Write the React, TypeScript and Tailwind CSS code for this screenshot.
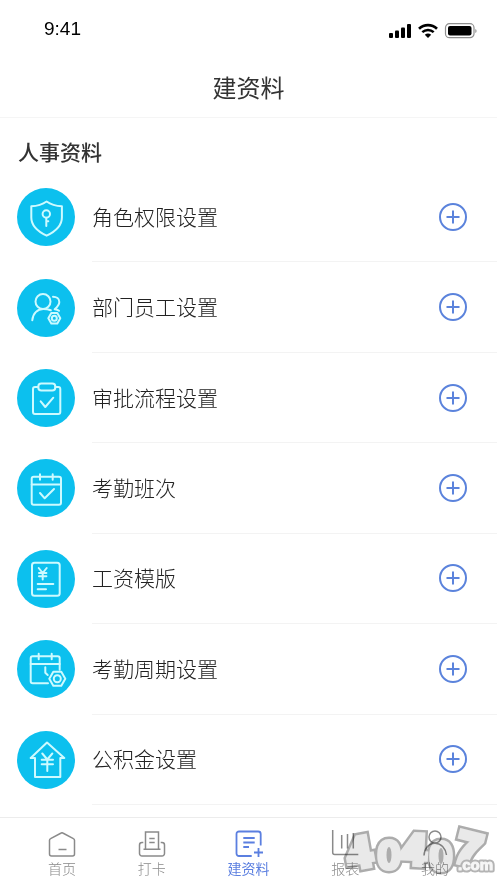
import type { ReactNode } from "react";
import clsx from "clsx";

type Item = {
  label: string;
  icon: ReactNode;
};

type Tab = {
  label: string;
  icon: ReactNode;
  active?: boolean;
};

const ITEMS: Item[] = [
  {
    label: "角色权限设置",
    icon: (
      <>
        <path d="M29.6 13.5c-4.5 3.2-9.5 4.5-15.3 4.800v11.200c0 8.500 6.500 14 15.300 18.200 8.800-4.200 15.300-9.700 15.300-18.200V18.300c-5.800-.3-10.800-1.600-15.300-4.800z" />
        <circle cx="29.300" cy="26" r="3.700" />
        <path d="M29.300 29.700V38M29.300 33.300h2" />
      </>
    ),
  },
  {
    label: "部门员工设置",
    icon: (
      <>
        <circle cx="26" cy="22.500" r="7.500" />
        <path d="M15.300 41.300c.5-6.800 5-11.300 11-11.300 3 0 5 .3 7.500 1.300" />
        <path d="M36 17.800c3.500 0 6.300 1.800 6.300 5.200 0 3-2 5-4.600 7.300M37.700 30.300c1.800.2 3.200.7 4.300 1.500" />
        <path d="M34.300 34h6l3 5.300-3 5.300h-6l-3-5.300z" />
        <circle cx="37.300" cy="39.300" r="2.500" />
      </>
    ),
  },
  {
    label: "审批流程设置",
    icon: (
      <>
        <path d="M21.300 18H18a2 2 0 0 0-2 2v23a2 2 0 0 0 2 2h23.300a2 2 0 0 0 2-2V20a2 2 0 0 0-2-2h-3" />
        <rect x="21.300" y="14.500" width="17" height="7" rx="3" />
        <path d="m23.700 32.300 4.600 5.700 8-9.300" />
      </>
    ),
  },
  {
    label: "考勤班次",
    icon: (
      <>
        <rect x="14.700" y="17.700" width="29.300" height="28" rx="2" />
        <path d="M14.700 25.500H44M23 15.300v5.400M35.700 15.300v5.400" />
        <path d="m23 34 4.700 5.300 9.300-9.300" />
      </>
    ),
  },
  {
    label: "工资模版",
    icon: (
      <>
        <rect x="15" y="12.700" width="27.700" height="33" rx="2.500" />
        <path d="m21.700 18 4 5 4-5M25.700 23v6.500M22 23h7.400M22 26.300h7.400" />
        <path d="M20.700 34h15.600M20.700 39.300H29" />
      </>
    ),
  },
  {
    label: "考勤周期设置",
    icon: (
      <>
        <path d="M31 43.300H15.700a2 2 0 0 1-2-2v-23a2 2 0 0 1 2-2h25a2 2 0 0 1 2 2v11.500" />
        <path d="M13.700 24h29M21.700 13.700v5.600M34.700 13.700v5.600M28.300 27.300v5.500l2.400 2.200" />
        <path d="M36.300 31.700h8l4 7-4 7h-8l-4-7z" />
        <circle cx="40.300" cy="38.700" r="3.500" />
      </>
    ),
  },
  {
    label: "公积金设置",
    icon: (
      <>
        <path d="M18 27v19h25.300V27h4L30 11.500 13.700 27z" />
        <path d="m25.300 22.500 5 6 5-6M30.300 28.500V40M24.700 28.700H36M24.700 33.200H36" />
      </>
    ),
  },
];

const TABS: Tab[] = [
  {
    label: "首页",
    icon: (
      <>
        <path d="M1.500 10.300c0-.8.400-1.400 1.100-1.700L13.200 3c.5-.3 1.100-.3 1.600 0l10.600 5.600c.7.300 1.100.9 1.100 1.700V24a2 2 0 0 1-2 2h-21a2 2 0 0 1-2-2z" />
        <path d="M10.500 19.500h8" />
      </>
    ),
  },
  {
    label: "打卡",
    icon: (
      <>
        <path d="M7.500 19V2h13v17M5.500 19.300h17M11.300 8.500h5.400M11.300 12.500h5.400" />
        <path d="M5.300 12.500H4a2.500 2.500 0 0 0-2.500 2.500v8.500A2.500 2.500 0 0 0 4 26h20a2.500 2.500 0 0 0 2.500-2.500V15a2.500 2.500 0 0 0-2.500-2.500h-1.300" />
      </>
    ),
  },
  {
    label: "建资料",
    active: true,
    icon: (
      <>
        <path d="M16.700 26H4a2.500 2.500 0 0 1-2.500-2.500V4A2.500 2.500 0 0 1 4 1.500h19.200A2.500 2.500 0 0 1 25.700 4v11.500" />
        <path d="M8.300 8h11.400M8.300 12.500h11.400M8.300 17H14M23.500 18v9M19 22.500h9" />
      </>
    ),
  },
  {
    label: "报表",
    icon: <path d="M1.700 0v22.500a2 2 0 0 0 2 2h23.600M10.700 5v13.500M16.500 4v14.500M22.300 3v15.500" />,
  },
  {
    label: "我的",
    icon: (
      <>
        <circle cx="14" cy="7" r="6" />
        <path d="M3 25.500C3.500 18 8 13.200 14 13.200S24.500 18 25.500 25" />
      </>
    ),
  },
];

// one letter of the logo: x, baseline, size, tilt
const LOGO_LETTERS: [string, number, number, number, number][] = [
  ["4", 22, 41, 42, -10],
  ["0", 52, 42, 37, 0],
  ["4", 77, 38, 42, 3],
  ["0", 104, 43, 37, 0],
  ["7", 132, 38, 44, 14],
];

function StatusBar() {
  return (
    <div className="flex h-[58px] items-center justify-between pr-5 pl-11 text-black">
      <span className="font-['Liberation_Sans',sans-serif] text-[19px] leading-6">9:41</span>
      <svg viewBox="0 0 90 18" className="mt-1 h-[18px] w-[90px]" aria-hidden="true">
        <rect x="2" y="11" width="4" height="5" rx="1" />
        <rect x="8" y="8.500" width="4" height="7.500" rx="1" />
        <rect x="14" y="5.500" width="4" height="10.500" rx="1" />
        <rect x="20" y="2" width="4" height="14" rx="1" />
        <path d="M32 6.800c5.200-4.800 12.800-4.800 18 0" fill="none" stroke="currentColor" strokeWidth="2.700" />
        <path d="M35.300 10.200c3.300-3 8.100-3 11.400 0" fill="none" stroke="currentColor" strokeWidth="2.500" />
        <path d="M37.800 12.700c2-1.600 4.400-1.600 6.400 0l-3.200 3.300z" />
        <rect x="58.500" y="1.700" width="28.500" height="14" rx="4" fill="none" stroke="#8f8f8f" strokeWidth="1.200" />
        <rect x="61" y="4" width="23.500" height="9.400" rx="2" />
        <path d="M88.300 7c1.700.6 1.700 3.400 0 4z" fill="#8f8f8f" />
      </svg>
    </div>
  );
}

function ItemRow({ label, icon }: Item) {
  return (
    <li className="flex min-h-20 gap-[17px] pl-[17px]">
      <span className="flex size-[58px] shrink-0 self-center rounded-full bg-[#0cc0ee]">
        <svg
          viewBox="0 0 58 58"
          className="size-full text-[#cdfaff]"
          fill="none"
          stroke="currentColor"
          strokeWidth="2"
          strokeLinecap="round"
          strokeLinejoin="round"
          aria-hidden="true"
        >
          {icon}
        </svg>
      </span>
      <div className="flex flex-1 items-center justify-between border-b border-[#f3f3f3] pr-[30px]">
        <span className="pb-[2px] text-[21px] leading-7 font-light text-[#222]">{label}</span>
        <button type="button" aria-label={`添加${label}`} className="size-7 text-[#5b83dc]">
          <svg viewBox="0 0 28 28" className="size-full" fill="none" stroke="currentColor" strokeWidth="2" aria-hidden="true">
            <circle cx="14" cy="14" r="13" />
            <path d="M14 7.500v13M7.500 14h13" />
          </svg>
        </button>
      </div>
    </li>
  );
}

function LogoLayer({ fill, width }: { fill: string; width: number }) {
  return (
    <g fill={fill} stroke={fill} strokeWidth={width} strokeLinejoin="miter" textAnchor="middle">
      {LOGO_LETTERS.map(([ch, x, y, size, tilt], i) => (
        <text key={i} x={x} y={y} fontSize={size} transform={`rotate(${tilt} ${x} ${y - 16})`}>
          {ch}
        </text>
      ))}
    </g>
  );
}

function SiteLogo() {
  return (
    <svg
      viewBox="0 0 160 57"
      className="pointer-events-none absolute right-0 bottom-0 h-[57px] w-40 overflow-visible font-['Liberation_Sans',sans-serif] font-bold mix-blend-multiply"
      aria-hidden="true"
    >
      <LogoLayer fill="#acacac" width={11} />
      <LogoLayer fill="#e9e9e9" width={6} />
      {/* counters of the two zeros */}
      <ellipse cx="52" cy="29" rx="2.500" ry="8" fill="#acacac" />
      <ellipse cx="104" cy="30" rx="2.500" ry="8" fill="#acacac" />
      <g fontSize="15" strokeLinejoin="round" textAnchor="end">
        <text x="156" y="44" fill="#b4b4b4" stroke="#b4b4b4" strokeWidth="5">.com</text>
        <text x="156" y="44" fill="#f6f6f6" stroke="#f6f6f6" strokeWidth="1">.com</text>
      </g>
    </svg>
  );
}

function TabBar() {
  return (
    <nav className="relative border-t border-[#ececec] bg-white px-12 pt-3 pb-[5px]">
      <div className="flex justify-between">
        {TABS.map((tab) => (
          <a
            key={tab.label}
            href="#"
            aria-current={tab.active ? "page" : undefined}
            className={clsx("flex flex-col items-center", tab.active ? "text-[#5b7fe0]" : "text-[#8a8a8a]")}
          >
            <svg
              viewBox="0 0 28 28"
              className="size-7"
              fill="none"
              stroke="currentColor"
              strokeWidth={tab.active ? 1.8 : 1.5}
              aria-hidden="true"
            >
              {tab.icon}
            </svg>
            <span className={clsx("text-sm leading-5", tab.active ? "font-normal" : "font-light")}>{tab.label}</span>
          </a>
        ))}
      </div>
      <SiteLogo />
    </nav>
  );
}

export default function App() {
  return (
    <div className="flex min-h-screen flex-col bg-white font-['Noto_Sans_CJK_SC',sans-serif]">
      <header className="border-b border-[#f5f5f5]">
        <StatusBar />
        <h1 className="flex h-[59px] items-center justify-center pb-[2px] text-2xl font-normal text-[#333]">建资料</h1>
      </header>
      <main className="flex flex-1 flex-col pb-3">
        <h2 className="px-[18px] pt-[19px] pb-[7px] text-[21px] leading-7 font-medium text-[#333]">人事资料</h2>
        <ul className="grid flex-1 auto-rows-fr">
          {ITEMS.map((item) => (
            <ItemRow key={item.label} {...item} />
          ))}
        </ul>
      </main>
      <TabBar />
    </div>
  );
}
